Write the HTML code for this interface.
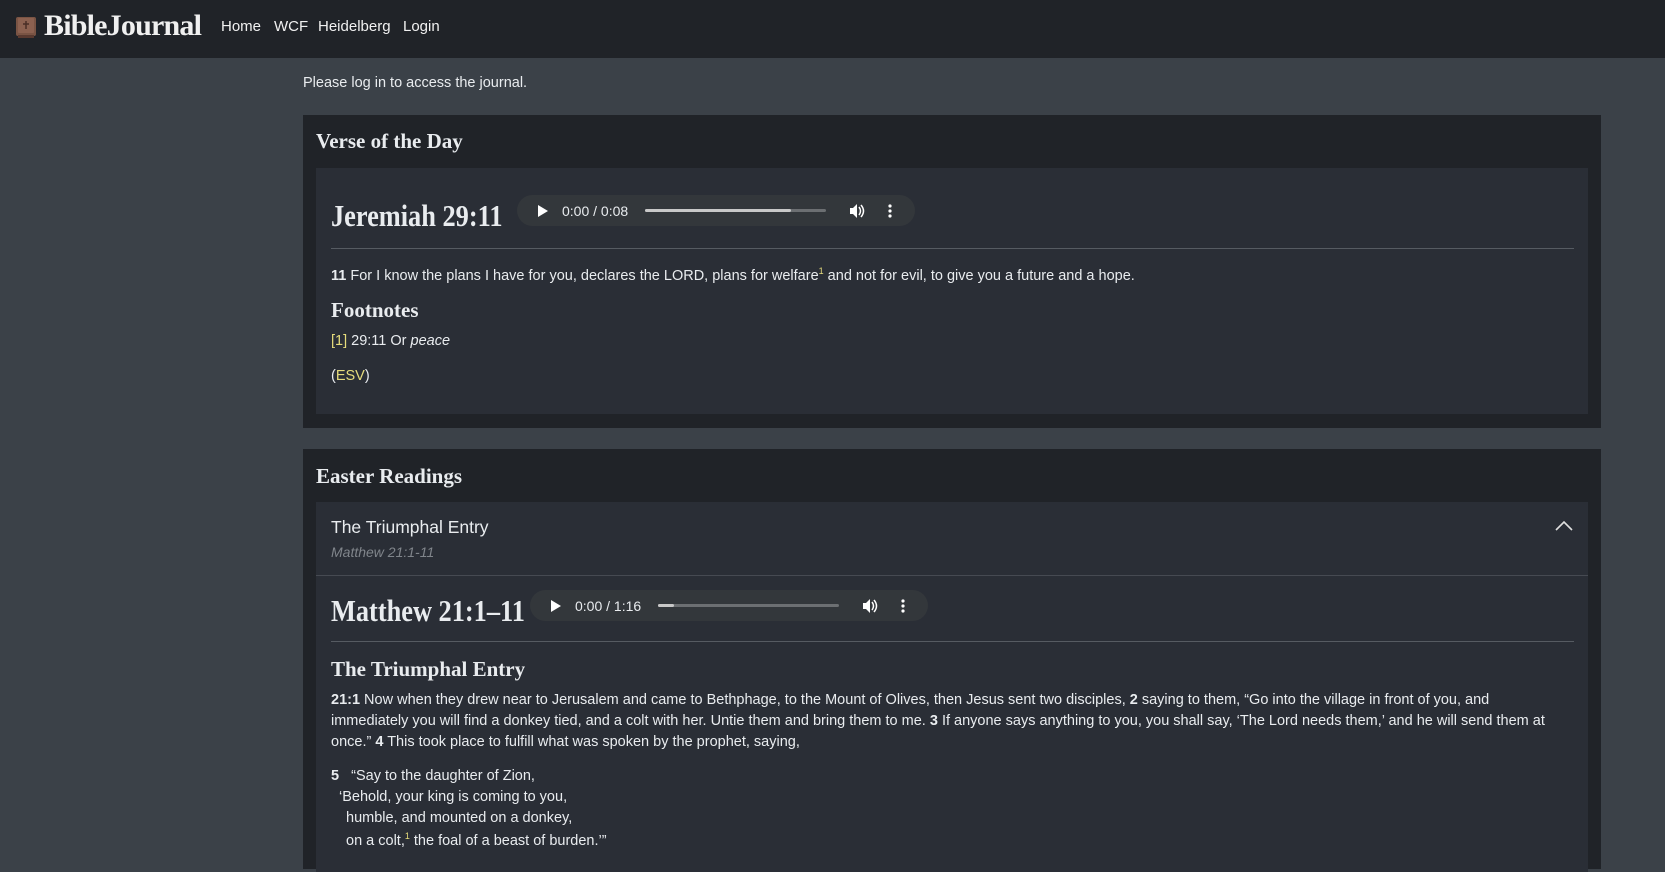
<!DOCTYPE html>
<html><head><meta charset="utf-8"><style>
*{box-sizing:border-box;margin:0;padding:0}
body{width:1665px;height:865px;overflow:hidden;background:#3b4148;color:#e9ecef;font-family:"Liberation Sans",sans-serif;font-size:14.5px;position:relative}
.a{position:absolute;white-space:nowrap}
.serif{font-family:"Liberation Serif",serif;font-weight:bold}
.big{font-size:31px;transform:scaleX(0.85);transform-origin:left top}
.hdr{left:0;top:0;width:1665px;height:58px;background:#202328}
.card{background:#202328}
.inner{background:#2a2e36}
.audio{background:#33373b;border-radius:16px;height:31px}
.y{color:#e6dc7c}
.hr{height:1px;background:#565b62}
</style></head><body>
<div class="a hdr"></div>
<svg class="a" style="left:15px;top:16px" width="22" height="23" viewBox="0 0 22 23"><rect x="1" y="1" width="20" height="19" rx="2" fill="#7a5444"/><rect x="3" y="2" width="16" height="15" rx="1" fill="#8c6150"/><rect x="3" y="19" width="16" height="3" fill="#5a3a30"/><path d="M11 5v8M8 8h6" stroke="#4a2e26" stroke-width="1.5"/></svg>
<div class="a serif" style="left:44px;top:9px;font-size:30px;color:#f0f0f0;letter-spacing:-0.8px">BibleJournal</div>
<div class="a" style="left:221px;top:18px;font-size:15px;color:#f0f0f0">Home</div>
<div class="a" style="left:274px;top:18px;font-size:15px;color:#f0f0f0">WCF</div>
<div class="a" style="left:318px;top:18px;font-size:15px;color:#f0f0f0">Heidelberg</div>
<div class="a" style="left:403px;top:18px;font-size:15px;color:#f0f0f0">Login</div>

<div class="a" style="left:303px;top:75px">Please log in to access the journal.</div>

<div class="a card" style="left:303px;top:115px;width:1298px;height:313px"></div>
<div class="a serif" style="left:316px;top:129px;font-size:21px">Verse of the Day</div>
<div class="a inner" style="left:316px;top:168px;width:1272px;height:246px"></div>
<div class="a serif big" style="left:331px;top:198px">Jeremiah 29:11</div>
<div class="a audio" style="left:517px;top:195px;width:398px"></div>
<svg class="a" style="left:537px;top:204px" width="12" height="14"><path d="M1 1L11 7L1 13Z" fill="#fff"/></svg>
<div class="a" style="left:562px;top:203px;font-size:14px">0:00 / 0:08</div>
<div class="a" style="left:645px;top:209px;width:181px;height:3px;background:#6c6f72;border-radius:2px"></div>
<div class="a" style="left:645px;top:209px;width:146px;height:3px;background:#c8c8c8;border-radius:2px"></div>
<svg class="a" style="left:849px;top:203px" width="16" height="16" viewBox="0 0 16 16"><path d="M1 5h3l4-4v14l-4-4H1z" fill="#fff"/><path d="M10 4q3 4 0 8M12 2q5 6 0 12" stroke="#fff" stroke-width="1.5" fill="none"/></svg>
<svg class="a" style="left:887px;top:203px" width="6" height="16"><circle cx="3" cy="3" r="1.6" fill="#fff"/><circle cx="3" cy="8" r="1.6" fill="#fff"/><circle cx="3" cy="13" r="1.6" fill="#fff"/></svg>
<div class="a hr" style="left:331px;top:248px;width:1243px"></div>
<div class="a" style="left:331px;top:266px"><b>11</b> For I know the plans I have for you, declares the LORD, plans for welfare<sup class="y" style="font-size:9px">1</sup> and not for evil, to give you a future and a hope.</div>
<div class="a serif" style="left:331px;top:298px;font-size:21px">Footnotes</div>
<div class="a" style="left:331px;top:333px"><span class="y">[1]</span> 29:11 Or <i>peace</i></div>
<div class="a" style="left:331px;top:368px">(<span class="y">ESV</span>)</div>

<div class="a card" style="left:303px;top:449px;width:1298px;height:420px"></div>
<div class="a serif" style="left:316px;top:464px;font-size:21px">Easter Readings</div>
<div class="a inner" style="left:316px;top:502px;width:1272px;height:370px"></div>
<div class="a" style="left:331px;top:517px;font-size:17.5px">The Triumphal Entry</div>
<div class="a" style="left:331px;top:544px;font-size:14px;color:#80858b;font-style:italic">Matthew 21:1-11</div>
<svg class="a" style="left:1555px;top:520px" width="18" height="11"><path d="M1 10L9 2L17 10" stroke="#e0e0e0" stroke-width="1.6" fill="none"/></svg>
<div class="a" style="left:316px;top:575px;width:1272px;height:1px;background:#464a52"></div>
<div class="a serif big" style="left:331px;top:593px">Matthew 21:1–11</div>
<div class="a audio" style="left:530px;top:590px;width:398px"></div>
<svg class="a" style="left:550px;top:599px" width="12" height="14"><path d="M1 1L11 7L1 13Z" fill="#fff"/></svg>
<div class="a" style="left:575px;top:598px;font-size:14px">0:00 / 1:16</div>
<div class="a" style="left:658px;top:604px;width:181px;height:3px;background:#6c6f72;border-radius:2px"></div>
<div class="a" style="left:658px;top:604px;width:16px;height:3px;background:#c8c8c8;border-radius:2px"></div>
<svg class="a" style="left:862px;top:598px" width="16" height="16" viewBox="0 0 16 16"><path d="M1 5h3l4-4v14l-4-4H1z" fill="#fff"/><path d="M10 4q3 4 0 8M12 2q5 6 0 12" stroke="#fff" stroke-width="1.5" fill="none"/></svg>
<svg class="a" style="left:900px;top:598px" width="6" height="16"><circle cx="3" cy="3" r="1.6" fill="#fff"/><circle cx="3" cy="8" r="1.6" fill="#fff"/><circle cx="3" cy="13" r="1.6" fill="#fff"/></svg>
<div class="a hr" style="left:331px;top:641px;width:1243px"></div>
<div class="a serif" style="left:331px;top:657px;font-size:21px">The Triumphal Entry</div>
<div class="a" style="left:331px;top:690px;line-height:21px"><b>21:1</b> Now when they drew near to Jerusalem and came to Bethphage, to the Mount of Olives, then Jesus sent two disciples, <b>2</b> saying to them, “Go into the village in front of you, and<br>immediately you will find a donkey tied, and a colt with her. Untie them and bring them to me. <b>3</b> If anyone says anything to you, you shall say, ‘The Lord needs them,’ and he will send them at<br>once.” <b>4</b> This took place to fulfill what was spoken by the prophet, saying,</div>
<div class="a" style="left:331px;top:768px"><b>5</b> &nbsp; “Say to the daughter of Zion,</div>
<div class="a" style="left:339px;top:789px">‘Behold, your king is coming to you,</div>
<div class="a" style="left:346px;top:810px">humble, and mounted on a donkey,</div>
<div class="a" style="left:346px;top:831px">on a colt,<sup class="y" style="font-size:9px">1</sup> the foal of a beast of burden.’”</div>
</body></html>
